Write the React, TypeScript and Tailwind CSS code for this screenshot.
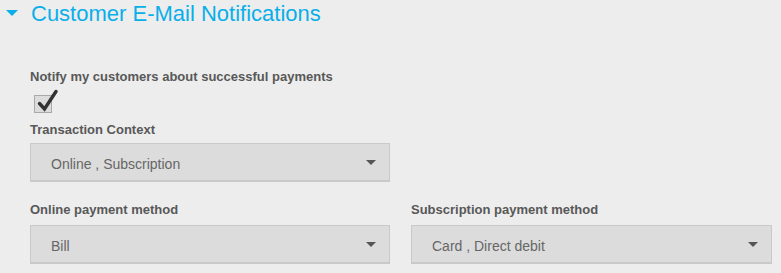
import React from "react";

const fields = [
  { label: "Online payment method", value: "Bill" },
  { label: "Subscription payment method", value: "Card , Direct debit" },
];

function Select({ value }: { value: string }) {
  return (
    <div className="flex h-[39px] items-center justify-between border border-[#c9c9c9] border-b-2 bg-[#dcdcdc] pl-[20px] pr-[13px]">
      <span className="mt-[4px] text-[14px] leading-[16px] text-[#666]">{value}</span>
      <svg width="10" height="5" viewBox="0 0 10 5">
        <path d="M0 0H10L5 5Z" fill="#555" />
      </svg>
    </div>
  );
}

function Label({ children }: { children: React.ReactNode }) {
  return <div className="text-[13px] font-bold leading-[16px] text-[#585858]">{children}</div>;
}

export default function App() {
  return (
    <div className="h-[273px] w-[781px] overflow-hidden bg-[#ededed] font-['Liberation_Sans',Arial,sans-serif]">
      {/* Header */}
      <div className="flex items-center pt-[1px]">
        <div className="flex w-[31px] pl-[6px]">
          <svg width="12" height="6" viewBox="0 0 12 6" className="mt-[-2px]">
            <path d="M0 0H12L6 6Z" fill="#0aafea" />
          </svg>
        </div>
        <h2 className="text-[22px] leading-[26px] text-[#0aafea]">Customer E-Mail Notifications</h2>
      </div>

      <div className="pl-[30px]">
        <div className="mt-[42px]">
          <Label>Notify my customers about successful payments</Label>
        </div>

        {/* Checkbox */}
        <div className="relative ml-[4px] mt-[10px] h-[18px] w-[18px] border border-[#a9a9a9] bg-[#dcdcdc]">
          <svg width="22" height="24" viewBox="0 0 22 24" className="absolute left-[2px] top-[-7px]">
            <path d="M2.5 14.5L7.5 20L19 2.5" fill="none" stroke="#333" strokeWidth="3.4" strokeLinecap="round" strokeLinejoin="miter" />
          </svg>
        </div>

        <div className="mt-[9px]">
          <Label>Transaction Context</Label>
        </div>
        <div className="mt-[5px] w-[360px]">
          <Select value="Online , Subscription" />
        </div>

        <div className="mt-[20px] grid grid-cols-[360px_361px] gap-x-[21px]">
          {fields.map(f => (
            <div key={f.label}>
              <Label>{f.label}</Label>
              <div className="mt-[7px]">
                <Select value={f.value} />
              </div>
            </div>
          ))}
        </div>
      </div>
    </div>
  );
}
